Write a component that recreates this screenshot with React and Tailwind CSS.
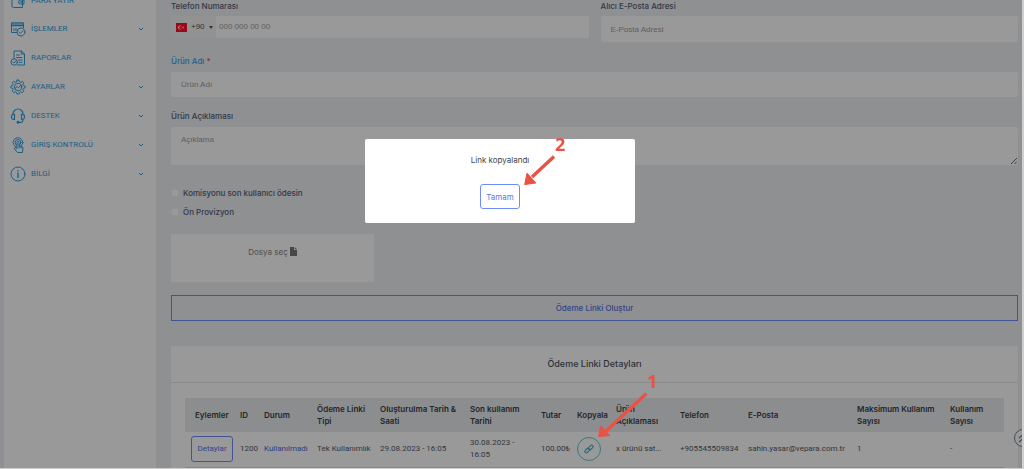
import React from "react";

const stroke = {
  viewBox: "0 0 16 16",
  fill: "none",
  stroke: "currentColor",
  strokeWidth: 1,
  strokeLinecap: "round",
  strokeLinejoin: "round",
  className: "size-4 shrink-0",
  "aria-hidden": true,
};

const WalletIcon = () => (
  <svg {...stroke}>
    <path d="M3 2.5h9.5v12h-9a1.5 1.5 0 0 1-1.500-1.500V3.500M12.500 7h1.500v4h-3.500a2 2 0 0 1 0-4z" />
    <circle cx="11" cy="9" r=".4" />
  </svg>
);
const TransactionsIcon = () => (
  <svg {...stroke}>
    <path d="M7.500 11.500H1.500V1.800h12v5M1.500 3h12" />
    <path d="M1.500 4.600h12" strokeWidth="1.300" />
    <path d="M4 7.500v2M6 7.500v2" />
    <circle cx="11" cy="11" r="4" fill="#fff" />
    <path d="m9.200 11 1.300 1.400 2.400-2.700" />
  </svg>
);
const ReportIcon = () => (
  <svg {...stroke}>
    <path d="M4 8.500V1h7.300L14.500 4v11H7.500M11.300 1v3h3.200M6.500 5h3M6.500 7.500h5.500M8.500 10h3.500M9 12.300h3" />
    <circle cx="4.200" cy="12" r="3.200" />
    <path d="m2.800 12 1.100 1.100 1.900-2.200" />
  </svg>
);
const GearIcon = () => (
  <svg {...stroke}>
    <path d="M7 1h2l.4 1.700 1.400.6 1.500-.9 1.400 1.400-.9 1.500.6 1.300L15 7v2l-1.600.4-.6 1.400.9 1.500-1.400 1.400-1.500-.9-1.400.6L9 15H7l-.4-1.600-1.400-.6-1.500.9-1.400-1.400.9-1.500-.6-1.400L1 9V7l1.600-.4.6-1.300-.9-1.500 1.400-1.400 1.500.9 1.400-.6z" />
    <circle cx="8" cy="8" r="3.700" />
    <path d="m5.200 9.300 2-1.800 1.300 1.300 2.500-2.600" />
  </svg>
);
const HeadsetIcon = () => (
  <svg {...stroke} strokeWidth="1.200">
    <path d="M3 6.500V6a5 5 0 0 1 10 0v.5M4.500 6.300v5H3.200A2 2 0 0 1 1.500 9.500V8.200a2 2 0 0 1 1.700-1.900zM11.500 6.300v5h1.300a2 2 0 0 0 1.700-1.800V8.200a2 2 0 0 0-1.700-1.900zM12.800 11.500v1a1.800 1.800 0 0 1-1.800 1.800H9" />
    <circle cx="8" cy="14.300" r=".9" />
  </svg>
);
const TouchIcon = () => (
  <svg {...stroke}>
    <circle cx="8" cy="5.500" r="4.800" />
    <circle cx="8" cy="5.500" r="2.900" />
    <path d="M7 11V5.500a1 1 0 0 1 2 0V9l3 .6c.7.200 1 .6 1 1.300l-.6 4.600H7.500L4.300 11.800c-.4-.8.4-1.400 1.200-1z" fill="#fff" />
    <path d="M9 9v2M11 9.500V11" />
  </svg>
);
const InfoIcon = () => (
  <svg {...stroke}>
    <circle cx="8" cy="8" r="7" />
    <path d="M8 7v4.500" strokeWidth="1.400" />
    <path d="M8 4.700v.1" strokeWidth="1.600" />
  </svg>
);

const menu = [
  { label: "PARA YATIR", Icon: WalletIcon },
  { label: "İŞLEMLER", Icon: TransactionsIcon, sub: true },
  { label: "RAPORLAR", Icon: ReportIcon },
  { label: "AYARLAR", Icon: GearIcon, sub: true },
  { label: "DESTEK", Icon: HeadsetIcon, sub: true },
  { label: "GİRİŞ KONTROLÜ", Icon: TouchIcon, sub: true },
  { label: "BİLGİ", Icon: InfoIcon, sub: true },
];

function Sidebar() {
  return (
    <nav className="w-[156px] shrink-0 border-l-4 border-[#eeeff7] bg-white text-[#3cabea]">
      <ul className="-mt-3.5">
        {menu.map(({ label, Icon, sub }) => (
          <li key={label} className="first:-mb-px">
            <a href="#" className="flex h-[29px] items-center gap-1 pr-3 pl-1.5 font-['Roboto',sans-serif] text-[8px] text-[#2f9fe0]">
              <Icon />
              <span className="grow pl-px">{label}</span>
              {sub && (
                <svg viewBox="0 0 6 6" fill="none" stroke="currentColor" strokeWidth="1" className="size-1.5" aria-hidden="true">
                  <path d="m1 2 2 2 2-2" />
                </svg>
              )}
            </a>
          </li>
        ))}
      </ul>
    </nav>
  );
}

const labelClass = "block h-3 text-[8px] leading-3 font-medium text-[#566074]";
const fieldClass =
  "block w-full rounded-xs bg-white px-2.5 font-['Liberation_Sans',sans-serif] text-[8px] text-[#777] placeholder:text-[#9c9ea2] outline-none";

function Flag() {
  return (
    <svg viewBox="0 0 11 9" className="h-[9px] w-[11px]" aria-hidden="true">
      <rect width="11" height="9" fill="#ff1028" />
      <circle cx="4.200" cy="4.500" r="2.100" fill="#fff" />
      <circle cx="4.800" cy="4.500" r="1.600" fill="#ff1028" />
      <path d="m6 4.500 1.800-.7-.9.7.9.7z" fill="#fff" stroke="#fff" strokeWidth=".3" />
    </svg>
  );
}

function PaymentForm() {
  return (
    <form onSubmit={(e) => e.preventDefault()}>
      <div className="grid grid-cols-2 gap-3">
        <div>
          <label htmlFor="phone" className={labelClass}>Telefon Numarası</label>
          <div className="mt-1 flex h-[22px]">
            <button type="button" className="flex w-[45px] shrink-0 items-center gap-1 rounded-l-xs bg-[#f4f4f4] pl-[5px] font-['Liberation_Sans',sans-serif] text-[8px] text-[#555]">
              <Flag />
              +90
              <svg viewBox="0 0 4 3" className="h-[3px] w-1" fill="#555" aria-hidden="true">
                <path d="M0 0h4L2 3z" />
              </svg>
            </button>
            <input id="phone" type="tel" placeholder="000 000 00 00" className="min-w-0 grow rounded-r-xs bg-white px-[3px] font-['Liberation_Sans',sans-serif] text-[8px] placeholder:text-[#9c9ea2] outline-none" />
          </div>
        </div>
        <div>
          <label htmlFor="email" className={labelClass}>Alıcı E-Posta Adresi</label>
          <input id="email" type="email" placeholder="E-Posta Adresi" className={`${fieldClass} mt-1 h-[26px]`} />
        </div>
      </div>

      <label htmlFor="product" className="mt-[13px] block h-3 text-[8px] leading-3 font-medium text-[#3ba0f5]">
        Ürün Adı <span className="text-[#f54848]">*</span>
      </label>
      <input id="product" placeholder="Ürün Adı" className={`${fieldClass} mt-[5px] h-[25px]`} />

      <label htmlFor="description" className={`${labelClass} mt-[13px]`}>Ürün Açıklaması</label>
      <div className="relative mt-[5px]">
        <textarea id="description" placeholder="Açıklama" className={`${fieldClass} h-[38px] resize-none pt-2 leading-[9px]`} />
        <svg viewBox="0 0 6 6" className="absolute right-px bottom-px size-1.5" stroke="#666" aria-hidden="true">
          <path d="m0 6 6-6M3.500 6 6 3.500" />
        </svg>
      </div>

      <div className="mt-5 flex flex-col gap-[3px] text-[8px] font-medium text-[#566074]">
        <label className="flex h-4 items-center gap-1">
          <input type="checkbox" className="size-2 appearance-none rounded-xs border border-[#f4f4f4] bg-white" />
          Komisyonu son kullanıcı ödesin
        </label>
        <label className="flex h-4 items-center gap-1">
          <input type="checkbox" className="size-2 appearance-none rounded-xs border border-[#f4f4f4] bg-white" />
          Ön Provizyon
        </label>
      </div>

      <button type="button" className="mt-3.5 flex h-12 w-[203px] justify-center gap-0.5 bg-white pt-3 text-[8px] leading-3 text-[#858585]">
        Dosya seç
        <svg viewBox="0 0 7 9" className="mt-px h-[9px] w-[7px]" fill="#777" aria-hidden="true">
          <path d="M0 0h4v3h3v6H0zM4.800 0 7 2.300H4.800z" />
        </svg>
      </button>

      <button type="submit" className="mt-[13px] flex h-[26px] w-full items-center justify-center border border-[#6e8cf5] text-[8px] font-medium text-[#5572e8]">
        Ödeme Linki Oluştur
      </button>
    </form>
  );
}

const columns = [
  ["Eylemler", "w-[51px]"],
  ["ID", "w-[24px]"],
  ["Durum", "w-[53px]"],
  ["Ödeme Linki Tipi", "w-[63px]"],
  ["Oluşturulma Tarih & Saati", "w-[90px]"],
  ["Son kullanım Tarihi", "w-[71px]"],
  ["Tutar", "w-[36px]"],
  ["Kopyala", "w-[39px]"],
  ["Ürün Açıklaması", "w-[64px]"],
  ["Telefon", "w-[68px]"],
  ["E-Posta", "w-[109px]"],
  ["Maksimum Kullanım Sayısı", "w-[93px]"],
  ["Kullanım Sayısı", "w-[58px]"],
];

function LinkButton() {
  return (
    <div className="relative w-6">
      <button type="button" aria-label="Kopyala" className="flex size-6 items-center justify-center rounded-full border border-[#58cdd0] text-[#3fb8c8]">
        <svg viewBox="0 0 10 10" fill="none" stroke="currentColor" strokeWidth="1.200" className="size-2.5" aria-hidden="true">
          <rect x="4.200" y="1.900" width="5.200" height="3" rx="1.500" transform="rotate(-45 6.800 3.400)" />
          <rect x=".6" y="5.100" width="5.200" height="3" rx="1.500" transform="rotate(-45 3.200 6.600)" />
        </svg>
      </button>
      <div className="pointer-events-none absolute bottom-3 left-5 z-50 h-16 w-16 text-[#e95244]">
        <svg viewBox="0 0 64 64" className="size-full" fill="currentColor" strokeLinejoin="round" aria-hidden="true">
          <path d="M49.500 8.500 9 46" stroke="currentColor" strokeWidth="3.400" />
          <path d="M1.800 51.500 3.500 41l9 9.500z" stroke="currentColor" strokeWidth="1.200" />
        </svg>
        <span className="absolute -top-3.5 left-[50px] font-['Open_Sans',sans-serif] text-[18px] leading-5 font-bold">1</span>
      </div>
    </div>
  );
}

function DetailsCard() {
  return (
    <section className="mt-[25px] bg-white pb-8">
      <h2 className="flex h-[37px] items-center justify-center border-b border-[#e6e6e8] text-[9px] font-medium text-[#4c5462]">
        Ödeme Linki Detayları
      </h2>
      <div className="px-3.5 pt-[15px]">
        <table className="w-full table-fixed text-left text-[8px] leading-3 text-[#555b66]">
          <colgroup>
            {columns.map(([name, width]) => (
              <col key={name} className={width} />
            ))}
          </colgroup>
          <thead className="bg-[#e9ecef] text-[#3c4046]">
            <tr className="h-[34px]">
              {columns.map(([name]) => (
                <th key={name} className="pl-1 font-semibold first:pl-2.5">{name}</th>
              ))}
            </tr>
          </thead>
          <tbody className="font-['Roboto',sans-serif]">
            <tr className="h-[35px] border-b border-[#e0e2e5]">
              <td className="pl-1.5">
                <button type="button" className="h-[26px] w-[42px] rounded-[3px] border border-[#6e8cf5] text-[#5572e8]">Detaylar</button>
              </td>
              <td className="pl-1">1200</td>
              <td className="pl-1 text-[#4a68d8]">Kullanılmadı</td>
              <td className="pl-1 whitespace-nowrap">Tek Kullanımlık</td>
              <td className="pl-1">29.08.2023 - 16:05</td>
              <td className="pr-4 pl-1">30.08.2023 - 16:05</td>
              <td className="pl-1">100.00₺</td>
              <td className="pl-1"><LinkButton /></td>
              <td className="pl-1">x ürünü sat...</td>
              <td className="pl-1">+905545509834</td>
              <td className="pl-1">sahin.yasar@vepara.com.tr</td>
              <td className="pl-1">1</td>
              <td className="pl-1">-</td>
            </tr>
          </tbody>
        </table>
      </div>
    </section>
  );
}

function Dialog() {
  return (
    <div className="fixed inset-0 z-40 flex items-start justify-center border-r-2 border-b border-[#cfcfcf] bg-black/40 pt-[139px] pr-[22px]">
      <div role="dialog" aria-modal="true" aria-labelledby="dialog-text" className="relative flex w-[270px] flex-col items-center rounded-xs bg-white pt-[15px] pb-3.5">
        <p id="dialog-text" className="text-[8px] leading-3 text-[#444]">Link kopyalandı</p>
        <button type="button" className="mt-[18px] h-[25px] w-10 rounded-[3px] border border-[#6e8cff] text-[8px] text-[#5b78f0]">Tamam</button>
        <div className="pointer-events-none absolute -top-1 right-16 h-[54px] w-12 text-[#e95244]">
          <svg viewBox="0 0 48 54" className="size-full" fill="currentColor" strokeLinejoin="round" aria-hidden="true">
            <path d="M31 21.500 9 42" stroke="currentColor" strokeWidth="3.400" />
            <path d="M1.800 49.500 4 38.500l8.500 9.500z" stroke="currentColor" strokeWidth="1.200" />
          </svg>
          <span className="absolute -top-px left-8 font-['Open_Sans',sans-serif] text-[18px] leading-5 font-bold">2</span>
        </div>
      </div>
    </div>
  );
}

export default function App() {
  return (
    <div className="flex h-screen overflow-hidden bg-[#edf0f4] font-['Inter','Liberation_Sans',sans-serif]">
      <Sidebar />
      <main className="min-w-0 grow pr-1.5 pl-[15px]">
        <PaymentForm />
        <DetailsCard />
      </main>
      <button type="button" aria-label="Yukarı" className="fixed -right-2 bottom-[22px] z-30 flex size-[18px] items-center justify-center rounded-full border border-[#71809c] bg-white text-[#71809c]">
        <svg viewBox="0 0 10 10" fill="none" stroke="currentColor" strokeWidth="1.300" className="size-2.5" aria-hidden="true">
          <path d="m1 5 4-3.500L9 5M1 9l4-3.500L9 9" />
        </svg>
      </button>
      <Dialog />
    </div>
  );
}
